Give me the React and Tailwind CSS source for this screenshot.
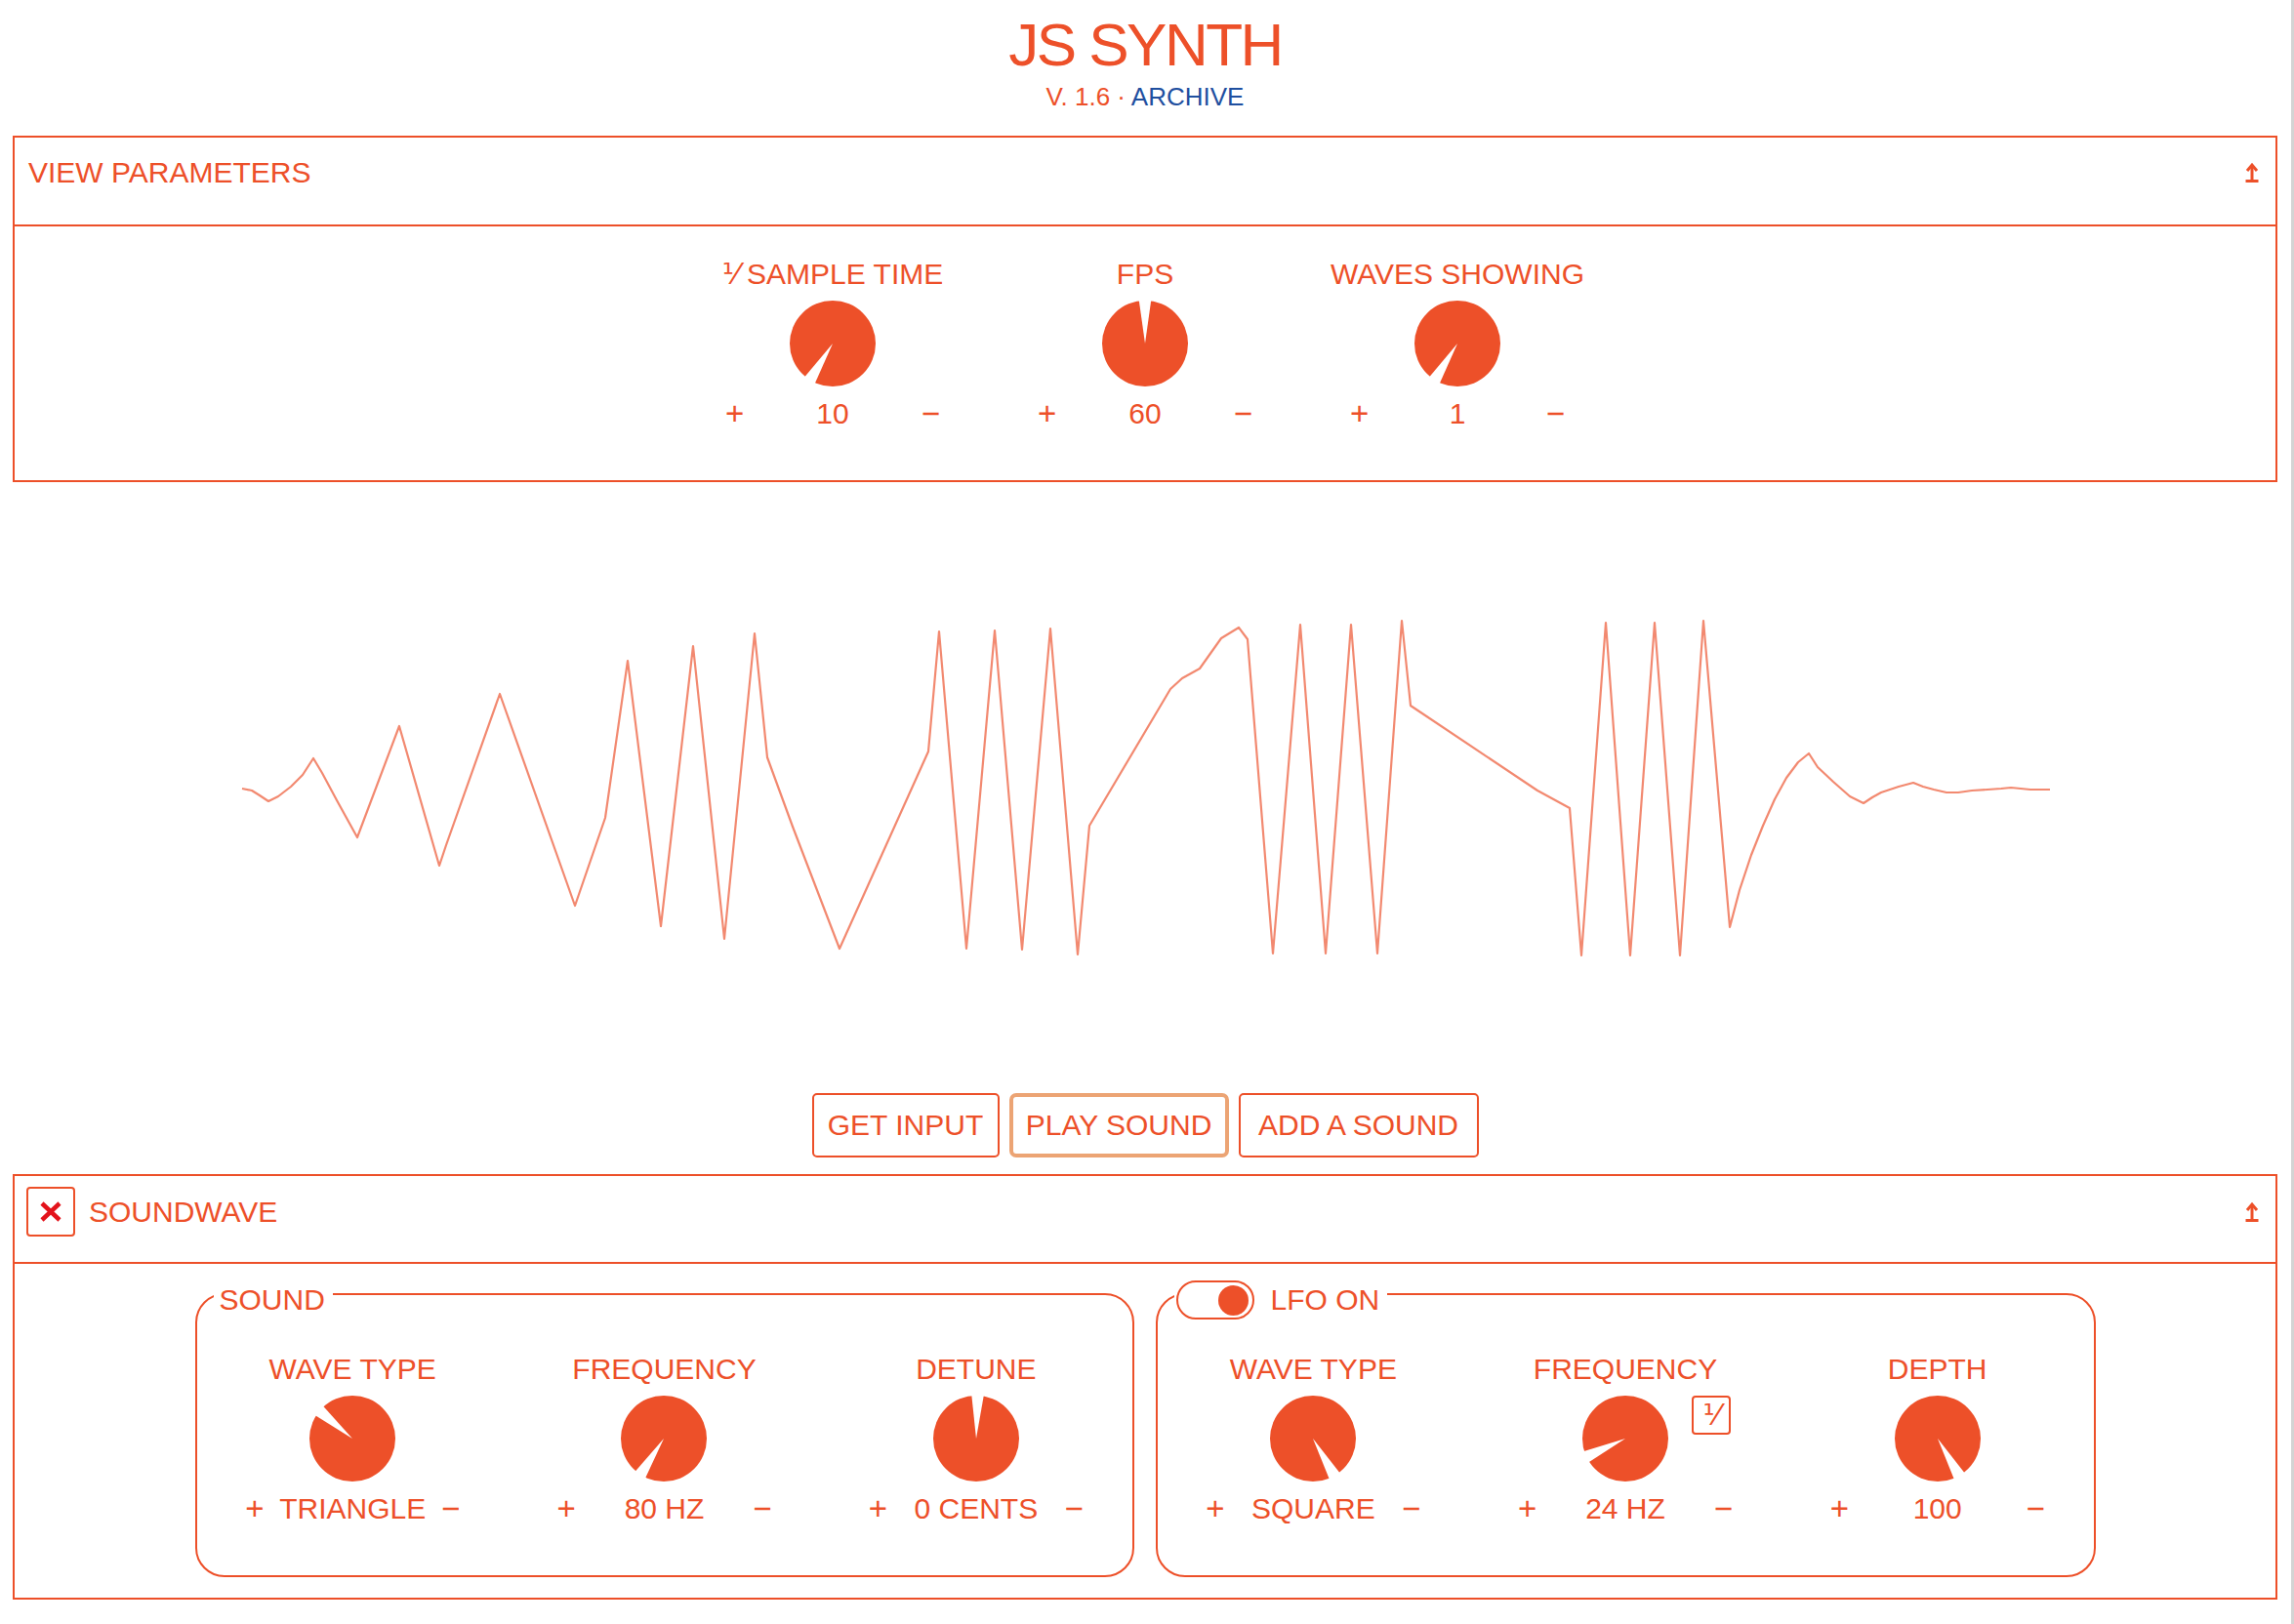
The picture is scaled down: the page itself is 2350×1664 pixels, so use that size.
import React from "react";

const ORANGE = "#ed5029";

function Knob({ angle }) {
  const half = 8;
  const pt = (a, rad) => {
    const t = ((a - 90) * Math.PI) / 180;
    return [44 + rad * Math.cos(t), 44 + rad * Math.sin(t)];
  };
  const [x1, y1] = pt(angle - half, 62);
  const [x2, y2] = pt(angle + half, 62);
  return (
    <svg width="88" height="88" viewBox="0 0 88 88" className="block">
      <circle cx="44" cy="44" r="44" fill={ORANGE} />
      <polygon points={`44,44 ${x1},${y1} ${x2},${y2}`} fill="#ffffff" />
    </svg>
  );
}

function UpArrow() {
  return (
    <svg width="14" height="22" viewBox="0 0 14 22" className="block">
      <path d="M7 3 V19" stroke={ORANGE} strokeWidth="3" fill="none" />
      <path d="M2 9 L7 3 L12 9" stroke={ORANGE} strokeWidth="3" fill="none" strokeLinejoin="miter" />
      <path d="M0.5 19.5 H13.5" stroke={ORANGE} strokeWidth="3" fill="none" />
    </svg>
  );
}

function Control({ label, value, angle, badge, wide }) {
  return (
    <div className={wide ? "flex flex-1 flex-col items-center" : "flex w-[320px] flex-col items-center"}>
      <div className="h-[34px] whitespace-nowrap text-[30px] leading-[34px]">{label}</div>
      <div className="relative mt-[10px]">
        <Knob angle={angle} />
        {badge && (
          <div className="absolute left-[112px] top-0 flex h-[40px] w-[40px] items-center justify-center rounded-[4px] border-2 border-[#ed5029] font-['DejaVu_Sans',sans-serif] text-[30px] leading-none">
            ⅟
          </div>
        )}
      </div>
      <div className="mt-[11px] flex h-[34px] w-[220px] items-center justify-between whitespace-nowrap text-[30px] leading-[34px]">
        <span className="text-[33px]">+</span>
        <span>{value}</span>
        <span className="text-[33px]">−</span>
      </div>
    </div>
  );
}

const WAVE = [
  [248, 808], [258, 810], [266, 815], [275, 821], [285, 816], [298, 806], [310, 794], [321, 777],
  [330, 792], [345, 820], [366, 858], [409, 744], [450, 887], [457, 866], [512, 711], [589, 928],
  [620, 838], [643, 677], [677, 949], [710, 662], [742, 962], [773, 649], [786, 776], [812, 847],
  [860, 972], [951, 770], [962, 647], [990, 972], [1019, 646], [1047, 973], [1076, 644], [1104, 978],
  [1116, 846], [1199, 706], [1211, 695], [1229, 685], [1251, 654], [1269, 643], [1278, 655], [1304, 977],
  [1332, 640], [1358, 977], [1384, 640], [1411, 977], [1436, 636], [1445, 723], [1575, 810], [1608, 828],
  [1620, 979], [1645, 638], [1670, 979], [1695, 638], [1721, 979], [1745, 636], [1772, 950], [1782, 912],
  [1794, 876], [1806, 846], [1818, 819], [1830, 797], [1842, 781], [1853, 772], [1862, 786], [1878, 801],
  [1895, 816], [1909, 823], [1918, 817], [1927, 812], [1945, 806], [1960, 802], [1970, 806], [1981, 809],
  [1994, 812], [2006, 812], [2020, 810], [2036, 809], [2050, 808], [2060, 807], [2080, 809], [2100, 809],
];

function Wave() {
  return (
    <svg viewBox="13 494 2320 626" className="block h-[626px] w-full" preserveAspectRatio="none">
      <polyline
        points={WAVE.map((p) => p.join(",")).join(" ")}
        fill="none"
        stroke="#f07457"
        strokeOpacity="0.85"
        strokeWidth="2.2"
        strokeLinejoin="round"
      />
    </svg>
  );
}

export default function App() {
  return (
    <div className="relative min-h-screen bg-white pb-[27px] pl-[13px] pr-[17px] font-['Liberation_Sans','DejaVu_Sans',sans-serif] text-[#ed5029]">
      <header className="pt-[15px] text-center">
        <h1 className="text-[62px] font-normal leading-[62px] tracking-[-2.5px]">JS SYNTH</h1>
        <div className="mt-[9px] text-[26px] leading-[26px]">
          V. 1.6 · <span className="text-[#1f4f9f]">ARCHIVE</span>
        </div>
      </header>

      <section className="mt-[27px] border-2 border-[#ed5029]">
        <div className="h-[91px] border-b-2 border-[#ed5029] pl-[14px] pr-[17px] pt-[11px]">
          <div className="flex h-[50px] items-center justify-between">
            <span className="text-[30px] leading-[34px]">VIEW PARAMETERS</span>
            <UpArrow />
          </div>
        </div>
        <div className="flex justify-center pb-[51px] pt-[32px]">
          <Control label="⅟ SAMPLE TIME" value="10" angle={212} />
          <Control label="FPS" value="60" angle={0} />
          <Control label="WAVES SHOWING" value="1" angle={212} />
        </div>
      </section>

      <Wave />

      <div className="flex justify-center gap-[10px]">
        <button className="h-[66px] w-[192px] rounded-[5px] border-2 border-[#ed5029] text-[30px] leading-[34px]">
          GET INPUT
        </button>
        <button className="h-[66px] w-[225px] rounded-[7px] border-4 border-[#eca474] text-[30px] leading-[34px]">
          PLAY SOUND
        </button>
        <button className="h-[66px] w-[246px] rounded-[5px] border-2 border-[#ed5029] text-[30px] leading-[34px]">
          ADD A SOUND
        </button>
      </div>

      <section className="mt-[17px] border-2 border-[#ed5029]">
        <div className="h-[90px] border-b-2 border-[#ed5029] pl-[12px] pr-[17px] pt-[11px]">
          <div className="flex h-[51px] items-center justify-between">
            <div className="flex items-center">
              <div className="flex h-[51px] w-[50px] items-center justify-center rounded-[4px] border-2 border-[#ed5029]">
                <svg width="22" height="21" viewBox="0 0 22 21" className="block">
                  <path d="M2 2 L20 19 M20 2 L2 19" stroke="#e3131b" strokeWidth="4.5" fill="none" />
                </svg>
              </div>
              <span className="ml-[14px] text-[30px] leading-[34px]">SOUNDWAVE</span>
            </div>
            <UpArrow />
          </div>
        </div>
        <div className="flex justify-center gap-[22px] pb-[21px] pt-[5px]">
          <fieldset className="w-[962px] rounded-[30px] border-2 border-[#ed5029]">
            <legend className="ml-[17px] h-[52px] pl-[6px] pr-[8px] pt-[12px]">
              <div className="flex h-[40px] items-center text-[30px] leading-[34px]">SOUND</div>
            </legend>
            <div className="flex pb-[51px] pt-[34px]">
              <Control wide label="WAVE TYPE" value="TRIANGLE" angle={310} />
              <Control wide label="FREQUENCY" value="80 HZ" angle={213} />
              <Control wide label="DETUNE" value="0 CENTS" angle={2} />
            </div>
          </fieldset>
          <fieldset className="w-[963px] rounded-[30px] border-2 border-[#ed5029]">
            <legend className="ml-[17px] h-[52px] pl-[2px] pr-[8px] pt-[12px]">
              <div className="flex h-[40px] items-center gap-[17px]">
                <div className="flex h-[40px] w-[80px] items-center justify-end rounded-full border-2 border-[#ed5029] pr-[4px]">
                  <div className="h-[31px] w-[31px] rounded-full bg-[#ed5029]" />
                </div>
                <span className="text-[30px] leading-[34px]">LFO ON</span>
              </div>
            </legend>
            <div className="flex pb-[51px] pt-[34px]">
              <Control wide label="WAVE TYPE" value="SQUARE" angle={150} />
              <Control wide label="FREQUENCY" value="24 HZ" angle={245} badge />
              <Control wide label="DEPTH" value="100" angle={150} />
            </div>
          </fieldset>
        </div>
      </section>

      <div className="fixed right-0 top-0 h-screen w-[3px] bg-[#d4d4d4]" />
    </div>
  );
}
